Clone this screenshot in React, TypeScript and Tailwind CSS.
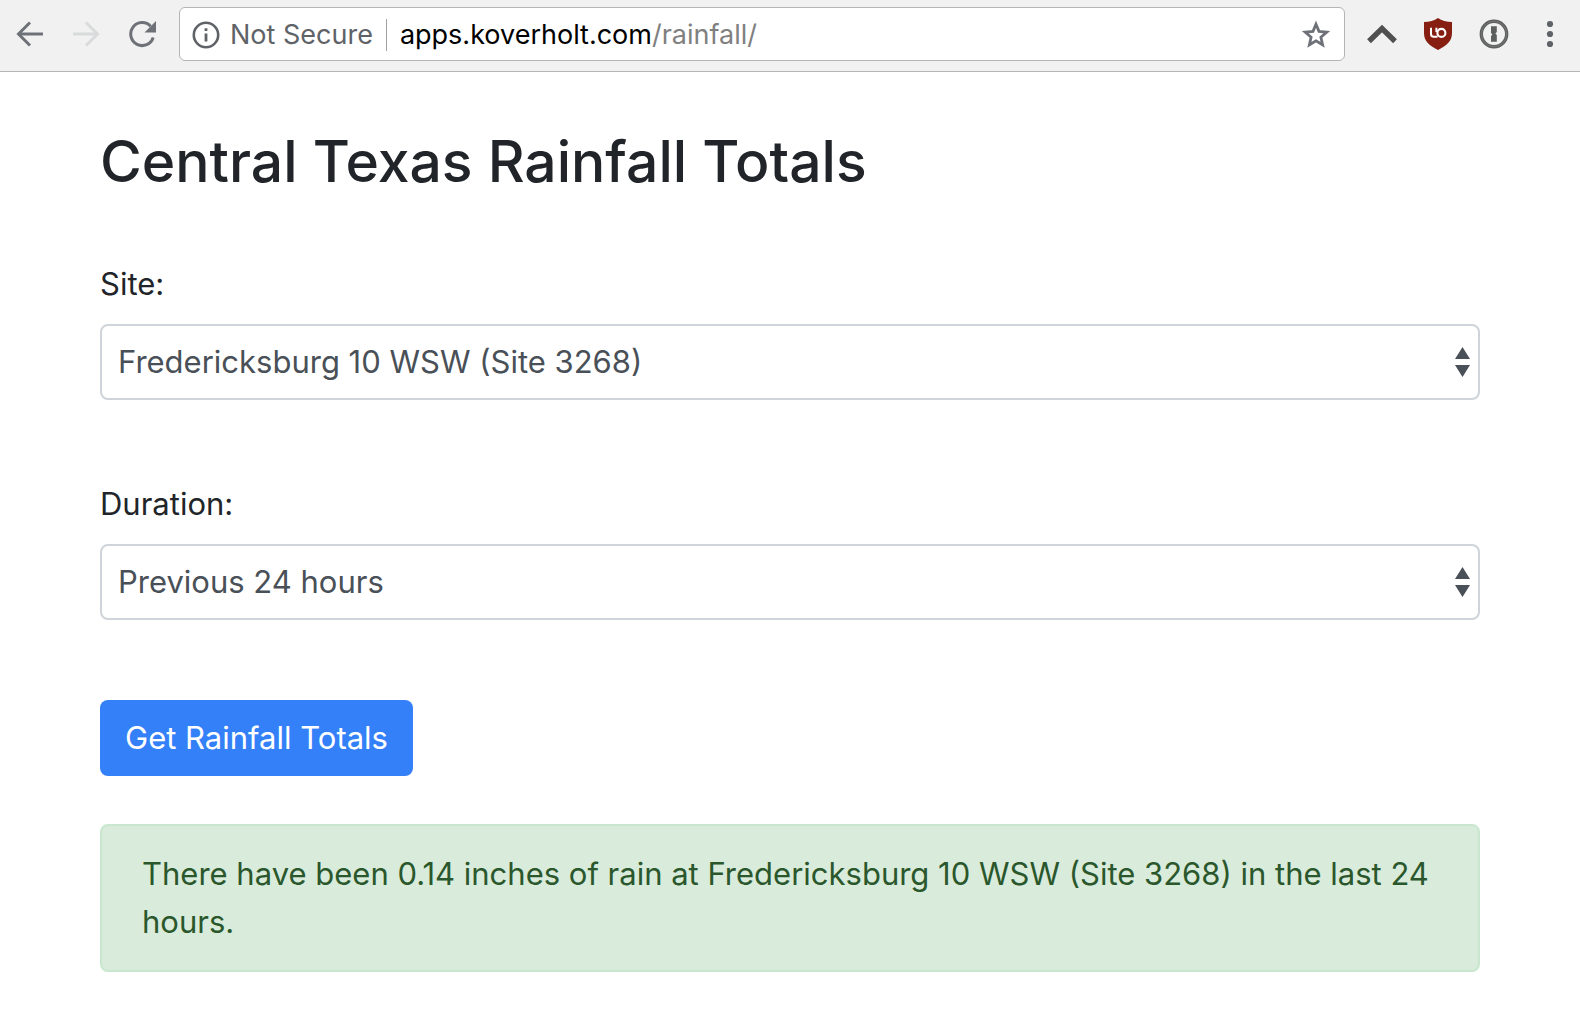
import React, { useState } from "react";

const SITES = ["Fredericksburg 10 WSW (Site 3268)"];
const DURATIONS = ["Previous 24 hours"];

function BackIcon() {
  return (
    <svg className="size-7" viewBox="0 0 28 28" fill="none" stroke="currentColor" strokeWidth="3" aria-hidden="true">
      <path d="M27 14H3" />
      <path d="M14 2.5L2.5 14L14 25.5" />
    </svg>
  );
}

function ForwardIcon() {
  return (
    <svg className="size-7" viewBox="0 0 28 28" fill="none" stroke="currentColor" strokeWidth="3" aria-hidden="true">
      <path d="M1 14H25" />
      <path d="M14 2.5L25.5 14L14 25.5" />
    </svg>
  );
}

function ReloadIcon() {
  return (
    <svg className="size-7" viewBox="0 0 28 28" aria-hidden="true">
      <path d="M22.6 6.2A11.5 11.5 0 1 0 25.2 17.5" fill="none" stroke="currentColor" strokeWidth="3" />
      <path d="M28 1V12.5H16.5Z" fill="currentColor" />
    </svg>
  );
}

function InfoIcon() {
  return (
    <svg className="size-7 shrink-0" viewBox="0 0 28 28" aria-hidden="true">
      <circle cx="14" cy="14" r="12.2" fill="none" stroke="currentColor" strokeWidth="2.6" />
      <path d="M12.6 7.2h2.8v2.9h-2.8zM12.6 12.4h2.8v8.2h-2.8z" fill="currentColor" />
    </svg>
  );
}

function StarIcon() {
  return (
    <svg className="size-8" viewBox="0 0 32 32" fill="none" stroke="currentColor" strokeWidth="2.8" aria-hidden="true">
      <path d="M16 5.2L19 12.4L26.8 13.1L20.9 18.2L22.6 25.8L16 21.8L9.4 25.8L11.1 18.2L5.2 13.1L13 12.4Z" />
    </svg>
  );
}

function CaretIcon() {
  return (
    <svg className="size-8" viewBox="0 0 32 32" fill="none" stroke="currentColor" strokeWidth="5.4" aria-hidden="true">
      <path d="M3 23.2L16 10.6L29 23.2" strokeLinejoin="miter" />
    </svg>
  );
}

function ShieldIcon() {
  return (
    <svg className="size-8" viewBox="0 0 32 32" aria-hidden="true">
      <path d="M16 0C12.4 2.8 7.4 4 2 4V15C2 23 7 27.5 16 32C25 27.5 30 23 30 15V4C24.6 4 19.6 2.8 16 0Z" fill="#861f11" />
      <path d="M9 9.8V16A2.8 2.8 0 0 0 11.8 18.8H15.5M14.4 9.8V14" fill="none" stroke="#fff" strokeWidth="2" />
      <circle cx="19.4" cy="14.9" r="4" fill="none" stroke="#fff" strokeWidth="2.1" />
    </svg>
  );
}

function KeyholeIcon() {
  return (
    <svg className="size-8" viewBox="0 0 32 32" aria-hidden="true">
      <circle cx="16" cy="16" r="12.7" fill="#f1f1f1" stroke="#5d5e5e" strokeWidth="3.4" />
      <circle cx="16" cy="16" r="12.7" fill="none" stroke="#7d7e7e" strokeWidth="0.8" />
      <path d="M13 8.2H18.8V14L17.4 15.6L18.8 17V23.8H13V18L14.4 16.6L13 15Z" fill="#5d5e5e" />
    </svg>
  );
}

function MenuIcon() {
  return (
    <svg className="size-8" viewBox="0 0 32 32" fill="currentColor" aria-hidden="true">
      <circle cx="16" cy="6" r="3.1" />
      <circle cx="16" cy="16" r="3.1" />
      <circle cx="16" cy="26" r="3.1" />
    </svg>
  );
}

function BrowserBar() {
  return (
    <header className="flex h-[72px] items-center border-b border-[#b4b4b4] bg-[#f1f1f1] pr-[14px] pb-1 pl-4 text-[#6e7278]">
      <nav className="flex gap-7" aria-label="History">
        <button type="button" aria-label="Back"><BackIcon /></button>
        <button type="button" aria-label="Forward" disabled className="text-[#d9dadb]"><ForwardIcon /></button>
        <button type="button" aria-label="Reload"><ReloadIcon /></button>
      </nav>
      <div className="ml-[23px] flex h-[54px] min-w-0 flex-1 items-center rounded-md border border-[#b4b4b4] bg-white px-3 pt-0.5 text-[27px] leading-[34px]">
        <button type="button" className="flex items-center gap-2.5 whitespace-nowrap text-[#5f6368]">
          <InfoIcon />
          Not Secure
        </button>
        <span className="mx-[13px] h-8 w-px shrink-0 bg-[#a0a0a0]" />
        <div
          role="textbox"
          aria-label="Address"
          contentEditable
          suppressContentEditableWarning
          className="min-w-0 flex-1 overflow-hidden whitespace-nowrap text-black outline-none"
        >
          apps.koverholt.com<span className="text-[#808080]">/rainfall/</span>
        </div>
        <button type="button" aria-label="Bookmark"><StarIcon /></button>
      </div>
      <div className="ml-[21px] flex gap-6">
        <button type="button" aria-label="Collapse" className="text-[#505050]"><CaretIcon /></button>
        <button type="button" aria-label="Content blocker"><ShieldIcon /></button>
        <button type="button" aria-label="Password manager"><KeyholeIcon /></button>
        <button type="button" aria-label="Menu" className="text-[#5f6368]"><MenuIcon /></button>
      </div>
    </header>
  );
}

function SelectField({ id, label, options }: { id: string; label: string; options: string[] }) {
  return (
    <div className="mb-20 flex flex-col">
      <label htmlFor={id} className="mb-4">{label}</label>
      <div className="relative">
        <select
          id={id}
          className="h-[76px] w-full appearance-none rounded-lg border-2 border-[#ced4da] bg-white pr-12 pl-4 text-[#495057]"
        >
          {options.map((o) => (
            <option key={o}>{o}</option>
          ))}
        </select>
        <svg
          className="pointer-events-none absolute inset-y-0 right-2.5 my-auto h-[30px] w-[15px]"
          viewBox="0 0 15 30"
          fill="#495057"
          aria-hidden="true"
        >
          <path d="M7.5 0L15 12H0ZM0 18H15L7.5 30Z" />
        </svg>
      </div>
    </div>
  );
}

export default function App() {
  const [shown, setShown] = useState(true);
  return (
    <div className="min-h-screen bg-white font-['Inter',sans-serif] text-[31px] leading-[48px] text-[#212529]">
      <BrowserBar />
      <main className="px-[100px] py-[52px]">
        <h1 className="mb-[60px] text-[57px] leading-[76px] font-medium">Central Texas Rainfall Totals</h1>
        <form
          onSubmit={(e: React.FormEvent) => {
            e.preventDefault();
            setShown(true);
          }}
        >
          <SelectField id="site" label="Site:" options={SITES} />
          <SelectField id="duration" label="Duration:" options={DURATIONS} />
          <button type="submit" className="h-[76px] rounded-lg bg-[#3380f8] px-[25px] text-white">
            Get Rainfall Totals
          </button>
        </form>
        {shown && (
          <div role="status" className="mt-12 rounded-lg border-2 border-[#c9e6ce] bg-[#d9ebdb] px-10 py-6 text-[#2a572b]">
            There have been 0.14 inches of rain at Fredericksburg 10 WSW (Site 3268) in the last 24 hours.
          </div>
        )}
      </main>
    </div>
  );
}
